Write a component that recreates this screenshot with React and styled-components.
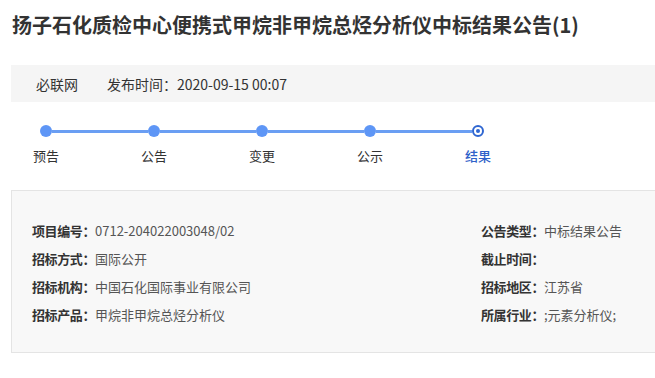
import React from "react";
import styled, { createGlobalStyle } from "styled-components";

const GlobalStyle = createGlobalStyle`
  html, body {
    margin: 0;
    padding: 0;
    background: #ffffff;
    overflow: hidden;
  }
  body {
    font-family: "Noto Sans CJK SC", "Liberation Sans", sans-serif;
    color: #333333;
  }
`;

const Page = styled.div`
  width: 655px;
  overflow: hidden;
`;

const Content = styled.div`
  width: 1000px;
  padding-left: 11px;
`;

const Title = styled.h1`
  margin: 0 0 15px 1px;
  height: 50px;
  line-height: 50px;
  font-size: 20px;
  font-weight: 700;
  color: #333333;
`;

const InfoBar = styled.div`
  display: flex;
  align-items: center;
  gap: 29px;
  height: 37px;
  padding-left: 25px;
  background: #f5f5f5;
  font-size: 14px;
  color: #333333;
`;

const Steps = styled.div`
  display: grid;
  grid-template-columns: repeat(5, 108px);
  margin: 23px 0 0 -19px;
`;

const Step = styled.div`
  display: flex;
  flex-direction: column;
  align-items: center;
`;

const Track = styled.div`
  display: flex;
  align-items: center;
  width: 100%;
  height: 12px;
`;

const Line = styled.div`
  flex: 1;
  height: 3px;
  background: ${(p) => (p.$hidden ? "transparent" : "#6a9ef3")};
`;

const Dot = styled.div`
  box-sizing: border-box;
  width: 12px;
  height: 12px;
  border-radius: 50%;
  flex-shrink: 0;
  background: #5e96f6;
`;

const CurrentDot = styled(Dot)`
  display: flex;
  align-items: center;
  justify-content: center;
  background: #ffffff;
  border: 2px solid #2f66d1;
  &::after {
    content: "";
    width: 4px;
    height: 4px;
    border-radius: 50%;
    background: #2f66d1;
  }
`;

const StepLabel = styled.div`
  margin-top: 11px;
  font-size: 13px;
  line-height: 16px;
  color: ${(p) => (p.$active ? "#2f62c9" : "#333333")};
  font-weight: ${(p) => (p.$active ? 500 : 400)};
`;

const Card = styled.div`
  margin-top: 26px;
  box-sizing: border-box;
  height: 163px;
  padding: 25px 0 0 20px;
  background: #f8f8f8;
  border: 1px solid #e4e4e4;
  display: grid;
  grid-template-columns: 449px 449px;
  grid-auto-rows: 28px;
`;

const Field = styled.div`
  display: flex;
  align-items: center;
  font-size: 13px;
  white-space: nowrap;
`;

const FieldLabel = styled.span`
  width: 63px;
  flex-shrink: 0;
  font-weight: 700;
  color: #333333;
  letter-spacing: -0.4px;
`;

const FieldValue = styled.span`
  color: #555555;
`;

const steps = ["预告", "公告", "变更", "公示", "结果"];

const fields = [
  ["项目编号：", "0712-204022003048/02"],
  ["公告类型：", "中标结果公告"],
  ["招标方式：", "国际公开"],
  ["截止时间：", ""],
  ["招标机构：", "中国石化国际事业有限公司"],
  ["招标地区：", "江苏省"],
  ["招标产品：", "甲烷非甲烷总烃分析仪"],
  ["所属行业：", ";元素分析仪;"],
];

export default function App() {
  return (
    <Page>
      <GlobalStyle />
      <Content>
        <Title>扬子石化质检中心便携式甲烷非甲烷总烃分析仪中标结果公告(1)</Title>
        <InfoBar>
          <span>必联网</span>
          <span>发布时间：2020-09-15 00:07</span>
        </InfoBar>
        <Steps>
          {steps.map((s, i) => {
            const last = i === steps.length - 1;
            return (
              <Step key={s}>
                <Track>
                  <Line $hidden={i === 0} />
                  {last ? <CurrentDot /> : <Dot />}
                  <Line $hidden={last} />
                </Track>
                <StepLabel $active={last}>{s}</StepLabel>
              </Step>
            );
          })}
        </Steps>
        <Card>
          {fields.map(([label, value]) => (
            <Field key={label}>
              <FieldLabel>{label}</FieldLabel>
              <FieldValue>{value}</FieldValue>
            </Field>
          ))}
        </Card>
      </Content>
    </Page>
  );
}
